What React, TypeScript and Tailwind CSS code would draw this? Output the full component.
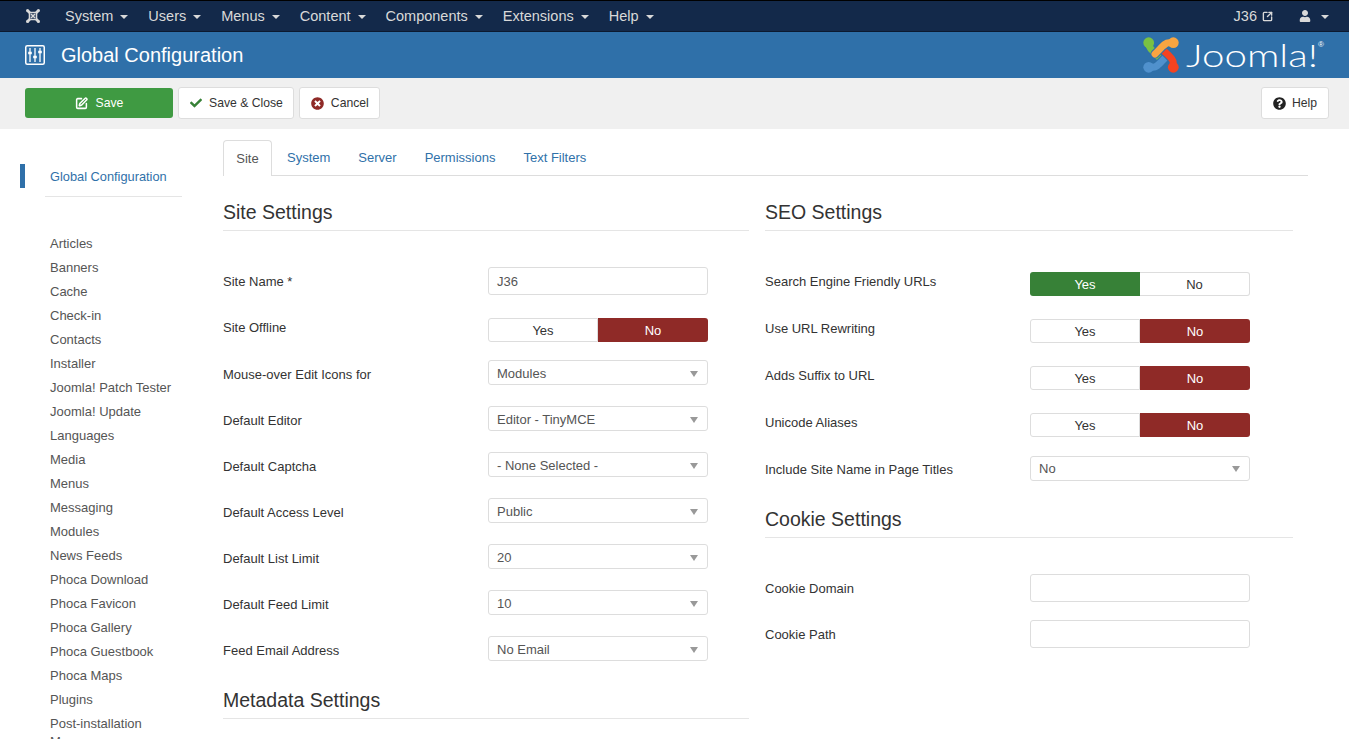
import { FaCheck, FaQuestionCircle, FaTimesCircle, FaUser } from 'react-icons/fa';
import { SquareArrowOutUpRight, SquarePen } from 'lucide-react';

const navItems = ['System', 'Users', 'Menus', 'Content', 'Components', 'Extensions', 'Help'];
const tabs = ['System', 'Server', 'Permissions', 'Text Filters'];
const sideItems = [
  'Articles', 'Banners', 'Cache', 'Check-in', 'Contacts', 'Installer', 'Joomla! Patch Tester', 'Joomla! Update',
  'Languages', 'Media', 'Menus', 'Messaging', 'Modules', 'News Feeds', 'Phoca Download', 'Phoca Favicon',
  'Phoca Gallery', 'Phoca Guestbook', 'Phoca Maps', 'Plugins', 'Post-installation Messages',
];
const leftSelects = [
  ['Mouse-over Edit Icons for', 'Modules'],
  ['Default Editor', 'Editor - TinyMCE'],
  ['Default Captcha', '- None Selected -'],
  ['Default Access Level', 'Public'],
  ['Default List Limit', '20'],
  ['Default Feed Limit', '10'],
  ['Feed Email Address', 'No Email'],
];
const seoToggles: [string, 'yes' | 'no'][] = [
  ['Search Engine Friendly URLs', 'yes'],
  ['Use URL Rewriting', 'no'],
  ['Adds Suffix to URL', 'no'],
  ['Unicode Aliases', 'no'],
];

const markArms = [
  'M5.7 5.7 C5.7 11 9 13 17 21',
  'M5.7 30.3 H10 C14 30.3 16 27 24 19',
  'M30.3 30.3 V26 C30.3 22 27 20 19 12',
  'M30.3 5.7 H26 C22 5.7 20 9 12 17',
];

function Caret() {
  return <span className="ml-[7px] inline-block h-0 w-0 border-x-[4px] border-t-[4px] border-x-transparent border-t-current align-middle" />;
}

function JoomlaMark({ className, colors, gap, width }: { className: string; colors: string[]; gap: string; width: number }) {
  return (
    <svg viewBox="0 0 36 36" className={className} fill="none" strokeLinecap="round" strokeLinejoin="round">
      {markArms.map((d, i) => (
        <g key={d}>
          <path d={d} stroke={gap} strokeWidth={width + 2} />
          <path d={d} stroke={colors[i]} strokeWidth={width} />
        </g>
      ))}
      <circle cx="5.7" cy="5.7" r="5.4" fill={colors[0]} />
      <circle cx="5.7" cy="30.3" r="5.4" fill={colors[1]} />
      <circle cx="30.3" cy="30.3" r="5.4" fill={colors[2]} />
      <circle cx="30.3" cy="5.7" r="5.4" fill={colors[3]} />
    </svg>
  );
}

function NavMark() {
  return (
    <svg viewBox="0 0 16 16" className="h-[16px] w-[16px]" fill="none" stroke="#d9d9d9">
      <path d="M3 3 L5 5 M13 3 L11 5 M13 13 L11 11 M3 13 L5 11" strokeWidth="2.5" />
      <path d="M4.5 4.5 H11.5 V11.5 H4.5 Z" strokeWidth="1.6" />
      <path d="M6 6 L10 10 M10 6 L6 10" strokeWidth="1.6" />
      <circle cx="2.6" cy="2.6" r="1.6" fill="#d9d9d9" stroke="none" />
      <circle cx="13.4" cy="2.6" r="1.6" fill="#d9d9d9" stroke="none" />
      <circle cx="13.4" cy="13.4" r="1.6" fill="#d9d9d9" stroke="none" />
      <circle cx="2.6" cy="13.4" r="1.6" fill="#d9d9d9" stroke="none" />
    </svg>
  );
}

function SlidersIcon() {
  return (
    <svg viewBox="0 0 20 20" className="h-[20px] w-[20px] text-white" fill="none" stroke="currentColor">
      <rect x="0.75" y="0.75" width="18.5" height="18.5" rx="1.5" strokeWidth="1.5" />
      <path d="M5 3v14M10 3v14M15 3v14" strokeWidth="1.3" />
      <path d="M3.2 8h3.6M8.2 12h3.6M13.2 7h3.6" strokeWidth="2.4" />
    </svg>
  );
}

function FieldSelect({ value, low }: { value: string; low?: boolean }) {
  return (
    <div className={low
      ? 'flex h-[25px] w-[220px] items-center justify-between rounded-[3px] border border-[#ddd] bg-white pl-2 pr-[9px] pt-[2px] text-[#555]'
      : 'flex h-[25px] w-[220px] items-center justify-between rounded-[3px] border border-[#ddd] bg-white pl-2 pr-[9px] pt-[1px] text-[#555]'}>
      <span>{value}</span>
      <span className="h-0 w-0 border-x-[4px] border-t-[6px] border-x-transparent border-t-[#999]" />
    </div>
  );
}

function Toggle({ active }: { active: 'yes' | 'no' }) {
  return (
    <div className="flex h-[24px] w-[220px] text-[#333]">
      <div className={active === 'yes'
        ? 'flex w-[110px] items-center justify-center rounded-l-[3px] bg-[#378137] pt-[1px] text-white'
        : 'flex w-[110px] items-center justify-center rounded-l-[3px] border border-[#ddd] bg-white pt-[1px]'}>Yes</div>
      <div className={active === 'no'
        ? 'flex w-[110px] items-center justify-center rounded-r-[3px] bg-[#8f2a27] pt-[1px] text-white'
        : 'flex w-[110px] items-center justify-center rounded-r-[3px] border border-l-0 border-[#ddd] bg-white pt-[1px]'}>No</div>
    </div>
  );
}

function Heading({ children }: { children: string }) {
  return <h2 className="border-b border-[#e5e5e5] pb-[6px] text-[19.5px] leading-[24px] text-[#333]">{children}</h2>;
}

export default function App() {
  return (
    <div className="flex h-[739px] flex-col overflow-hidden bg-white text-[13px] leading-[18px] text-[#333] [font-family:'Liberation_Sans',Arial,sans-serif]">
      <nav className="flex h-[32px] shrink-0 items-center border-y border-t-black border-b-[#0c1a30] bg-[#13294a] pl-[25px] text-[14.5px] text-[#d9d9d9]">
        <NavMark />
        <div className="ml-[24px] flex gap-[20px]">
          {navItems.map(item => (
            <span key={item}>{item}<Caret /></span>
          ))}
        </div>
        <div className="ml-auto flex items-center pr-[20px]">
          <span>J36</span>
          <SquareArrowOutUpRight className="ml-[5px] h-[11px] w-[11px]" strokeWidth={3} />
          <FaUser className="ml-[26px] h-[12px] w-[12px]" />
          <span className="ml-[3px]"><Caret /></span>
        </div>
      </nav>

      <header className="flex h-[46px] shrink-0 items-center bg-[#2f70a9] pl-[25px] pr-[25px] text-white">
        <SlidersIcon />
        <h1 className="ml-[16px] text-[20px]">Global Configuration</h1>
        <div className="ml-auto flex items-center">
          <JoomlaMark className="h-[36px] w-[36px]" colors={['#7ac143', '#5091cd', '#f44321', '#f9a541']} gap="#2f70a9" width={7} />
          <span className="ml-[7px] mr-[27px] inline-block w-[105px] origin-left scale-x-[1.26] text-[32px] leading-[36px] font-light [font-family:Lato,sans-serif]">Joomla!</span>
          <span className="mb-[20px] text-[8px] leading-none">®</span>
        </div>
      </header>

      <div className="flex h-[51px] shrink-0 items-start bg-[#f0f0f0] pl-[25px] pr-[20px] pt-[9px] text-[12.2px]">
        <button className="mt-[1px] flex h-[30px] w-[148px] items-center justify-center rounded-[3px] bg-[#3f9a42] text-white">
          <SquarePen className="mr-[8px] h-[13px] w-[13px]" strokeWidth={2.8} />Save
        </button>
        <button className="ml-[5px] flex h-[32px] items-center rounded-[3px] border border-[#ddd] bg-white pl-[11px] pr-[10px]">
          <FaCheck className="mr-[7px] h-[12px] w-[12px] text-[#378137]" />Save &amp; Close
        </button>
        <button className="ml-[5px] flex h-[32px] items-center rounded-[3px] border border-[#ddd] bg-white pl-[11px] pr-[10px]">
          <FaTimesCircle className="mr-[7px] h-[13px] w-[13px] text-[#8f2a27]" />Cancel
        </button>
        <button className="ml-auto flex h-[32px] items-center rounded-[3px] border border-[#ddd] bg-white px-[11px]">
          <FaQuestionCircle className="mr-[6px] h-[13px] w-[13px] text-[#222]" />Help
        </button>
      </div>

      <div className="flex min-h-0 flex-1">
        <aside className="w-[223px] shrink-0 pt-[35px]">
          <div className="flex">
            <div className="ml-[20px] h-[24px] w-[5px] bg-[#2f70a9]" />
            <div className="ml-[20px] w-[137px] border-b border-[#e5e5e5] pb-[10px] pl-[5px] pt-[4px] text-[12.8px] text-[#3071a9]">Global Configuration</div>
          </div>
          <ul className="ml-[50px] mt-[38px] w-[130px] text-[#555]">
            {sideItems.map(item => (
              <li key={item} className="pb-[6px]">{item}</li>
            ))}
          </ul>
        </aside>

        <main className="flex min-w-0 flex-1 flex-col pr-[41px] pt-[11px]">
          <div className="flex h-[36px] border-b border-[#ddd]">
            <div className="flex h-[36px] w-[49px] items-center justify-center rounded-t-[4px] border border-b-0 border-[#ddd] bg-white text-[#555]">Site</div>
            <div className="ml-[15px] flex items-center gap-[28px] text-[#3071a9]">
              {tabs.map(tab => <span key={tab}>{tab}</span>)}
            </div>
          </div>

          <div className="flex pt-[24px]">
            <section className="w-[526px] shrink-0">
              <Heading>Site Settings</Heading>
              <div className="mt-[36px] flex h-[28px] items-center">
                <span className="w-[265px] pt-[2px]">Site Name *</span>
                <div className="flex h-[28px] w-[220px] items-center rounded-[3px] border border-[#ddd] bg-white pl-2 pt-[1px] text-[#555]">J36</div>
              </div>
              <div className="mt-[23px] flex items-center">
                <span className="w-[265px] pb-[4px]">Site Offline</span>
                <Toggle active="no" />
              </div>
              <div className="mt-[18px] flex flex-col gap-[21px]">
                {leftSelects.map(([label, value]) => (
                  <div key={label} className="flex items-center">
                    <span className="w-[265px] pt-[4px]">{label}</span>
                    <FieldSelect value={value} low />
                  </div>
                ))}
              </div>
              <div className="mt-[27px]"><Heading>Metadata Settings</Heading></div>
            </section>

            <section className="ml-[16px] w-[528px] shrink-0">
              <Heading>SEO Settings</Heading>
              <div className="mt-[41px] flex flex-col gap-[23px]">
                {seoToggles.map(([label, active]) => (
                  <div key={label} className="flex items-center">
                    <span className="w-[265px] pb-[4px]">{label}</span>
                    <Toggle active={active} />
                  </div>
                ))}
              </div>
              <div className="mt-[19px] flex items-center">
                <span className="w-[265px] pt-[2px]">Include Site Name in Page Titles</span>
                <FieldSelect value="No" />
              </div>
              <div className="mt-[26px]"><Heading>Cookie Settings</Heading></div>
              <div className="mt-[36px] flex flex-col gap-[18px]">
                {['Cookie Domain', 'Cookie Path'].map(label => (
                  <div key={label} className="flex items-center">
                    <span className="w-[265px] pt-[2px]">{label}</span>
                    <div className="h-[28px] w-[220px] rounded-[3px] border border-[#ddd] bg-white" />
                  </div>
                ))}
              </div>
            </section>
          </div>
        </main>
      </div>
    </div>
  );
}
